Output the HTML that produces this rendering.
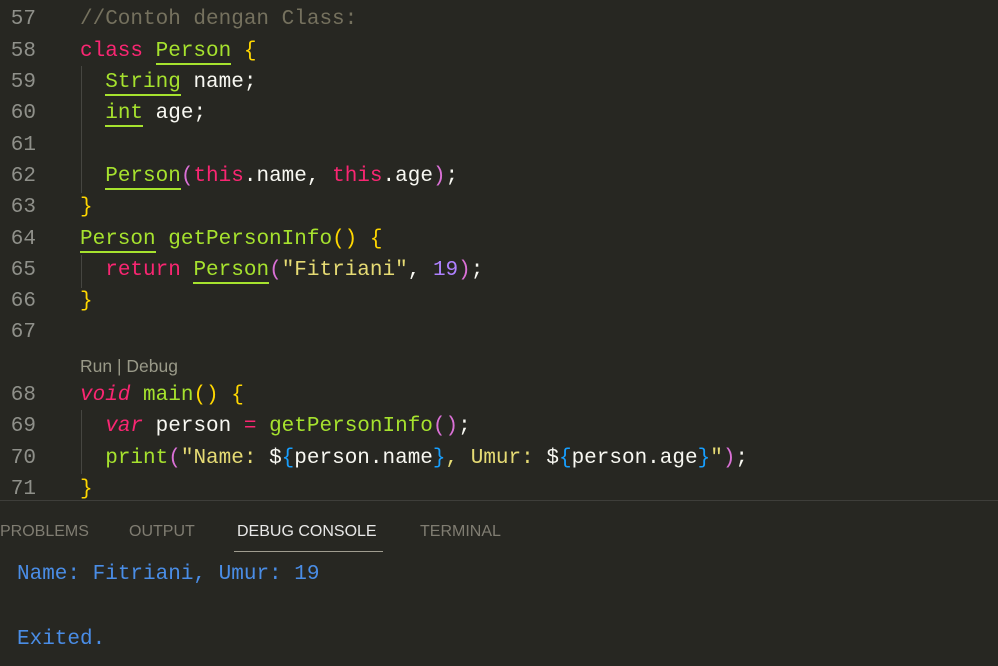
<!DOCTYPE html>
<html><head><meta charset="utf-8"><style>
html,body{margin:0;padding:0;background:#272722;width:998px;height:666px;overflow:hidden}
.l{position:absolute;left:0;height:31.3px;line-height:31.3px;font-family:"Liberation Mono","DejaVu Sans Mono",monospace;font-size:21px;color:#f8f8f2;white-space:pre}
.n{position:absolute;left:0;width:36px;text-align:right;color:#8f908a}
.c{position:absolute;left:80px}
.k{color:#f92672}.t{color:#a6e22e}.u{border-bottom:2px solid #a6e22e}
.y{color:#ffd700}.p{color:#da70d6}.b{color:#179fff}.s{color:#e6db74}.m{color:#ae81ff}.cm{color:#75715e}
.i{font-style:italic}
.g{position:absolute;left:81px;width:1px;background:#464641}
.sep{position:absolute;left:0;top:500px;width:998px;height:1px;background:#3e3e3a}
.tab{position:absolute;top:523px;font-family:"Liberation Sans",sans-serif;font-size:16px;color:#807d72}
.out{position:absolute;left:17px;font-family:"Liberation Mono","DejaVu Sans Mono",monospace;font-size:21px;color:#4a8de6}
</style></head><body>
<div class="g" style="top:66px;height:127px"></div>
<div class="g" style="top:255px;height:33px"></div>
<div class="g" style="top:410px;height:64px"></div>
<div style="position:absolute;left:0;top:2px;width:998px;height:500px">
<div class="l" style="top:2.4px"><span class="n">57</span><span class="c"><span class="cm">//Contoh dengan Class:</span></span></div>
<div class="l" style="top:33.7px"><span class="n">58</span><span class="c"><span class="k">class</span> <span class="t u">Person</span> <span class="y">{</span></span></div>
<div class="l" style="top:65px"><span class="n">59</span><span class="c">  <span class="t u">String</span> name;</span></div>
<div class="l" style="top:96.3px"><span class="n">60</span><span class="c">  <span class="t u">int</span> age;</span></div>
<div class="l" style="top:127.6px"><span class="n">61</span></div>
<div class="l" style="top:158.9px"><span class="n">62</span><span class="c">  <span class="t u">Person</span><span class="p">(</span><span class="k">this</span>.name, <span class="k">this</span>.age<span class="p">)</span>;</span></div>
<div class="l" style="top:190.2px"><span class="n">63</span><span class="c"><span class="y">}</span></span></div>
<div class="l" style="top:221.5px"><span class="n">64</span><span class="c"><span class="t u">Person</span> <span class="t">getPersonInfo</span><span class="y">()</span> <span class="y">{</span></span></div>
<div class="l" style="top:252.8px"><span class="n">65</span><span class="c">  <span class="k">return</span> <span class="t u">Person</span><span class="p">(</span><span class="s">"Fitriani"</span>, <span class="m">19</span><span class="p">)</span>;</span></div>
<div class="l" style="top:284.1px"><span class="n">66</span><span class="c"><span class="y">}</span></span></div>
<div class="l" style="top:315.4px"><span class="n">67</span></div>
<div class="l" style="top:348.7px"><span class="c" style="font-family:'Liberation Sans',sans-serif;font-size:17.5px;color:#999988">Run | Debug</span></div>
<div class="l" style="top:378px"><span class="n">68</span><span class="c"><span class="k i">void</span> <span class="t">main</span><span class="y">()</span> <span class="y">{</span></span></div>
<div class="l" style="top:409.3px"><span class="n">69</span><span class="c">  <span class="k i">var</span> person <span class="k">=</span> <span class="t">getPersonInfo</span><span class="p">()</span>;</span></div>
<div class="l" style="top:440.6px"><span class="n">70</span><span class="c">  <span class="t">print</span><span class="p">(</span><span class="s">"Name: </span>$<span class="b">{</span>person.name<span class="b">}</span><span class="s">, Umur: </span>$<span class="b">{</span>person.age<span class="b">}</span><span class="s">"</span><span class="p">)</span>;</span></div>
<div class="l" style="top:471.9px"><span class="n">71</span><span class="c"><span class="y">}</span></span></div>
</div>
<div class="sep"></div>
<div class="tab" style="left:0">PROBLEMS</div>
<div class="tab" style="left:129px">OUTPUT</div>
<div class="tab" style="left:237px;color:#e8e8e8">DEBUG CONSOLE</div>
<div style="position:absolute;left:234px;top:551px;width:149px;height:1px;background:#a09d90"></div>
<div class="tab" style="left:420px">TERMINAL</div>
<div class="out" style="top:563px">Name: Fitriani, Umur: 19</div>
<div class="out" style="top:628px">Exited.</div>
</body></html>
